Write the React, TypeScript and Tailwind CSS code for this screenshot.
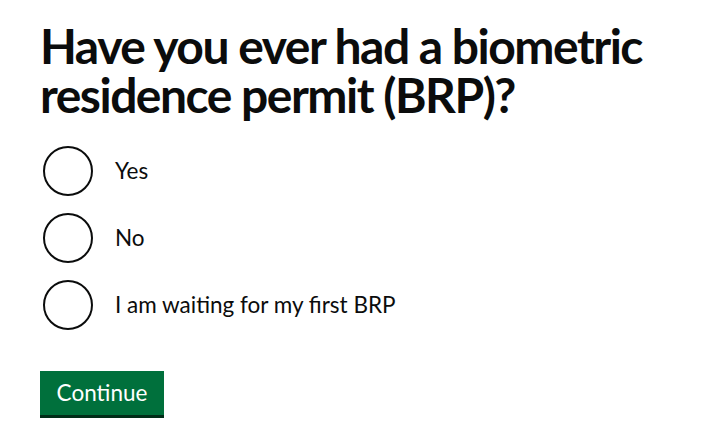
import React from "react";

const options = ["Yes", "No", "I am waiting for my first BRP"];

export default function App() {
  return (
    <div className="min-h-[432px] w-[724px] bg-white text-[#0b0c0c] px-[40px] pt-[21px]" style={{ fontFamily: 'Lato, sans-serif' }}>
      <h1 className="text-[48px] leading-[49px] font-bold tracking-[-1.5px] m-0">
        Have you ever had a biometric residence permit (BRP)?
      </h1>
      <div className="mt-[27px] flex flex-col gap-[17px]">
        {options.map((o) => (
          <label key={o} className="flex items-center">
            <span className="ml-[3px] w-[50px] h-[50px] rounded-full border-[2.5px] border-[#0b0c0c] bg-white shrink-0" />
            <span className="ml-[22px] text-[22.5px] leading-[28px]">{o}</span>
          </label>
        ))}
      </div>
      <button className="mt-[41px] h-[44px] w-[124px] bg-[#00703c] text-white text-[22.5px] leading-[28px] shadow-[0_3px_0_#002d18]">
        Continue
      </button>
    </div>
  );
}
